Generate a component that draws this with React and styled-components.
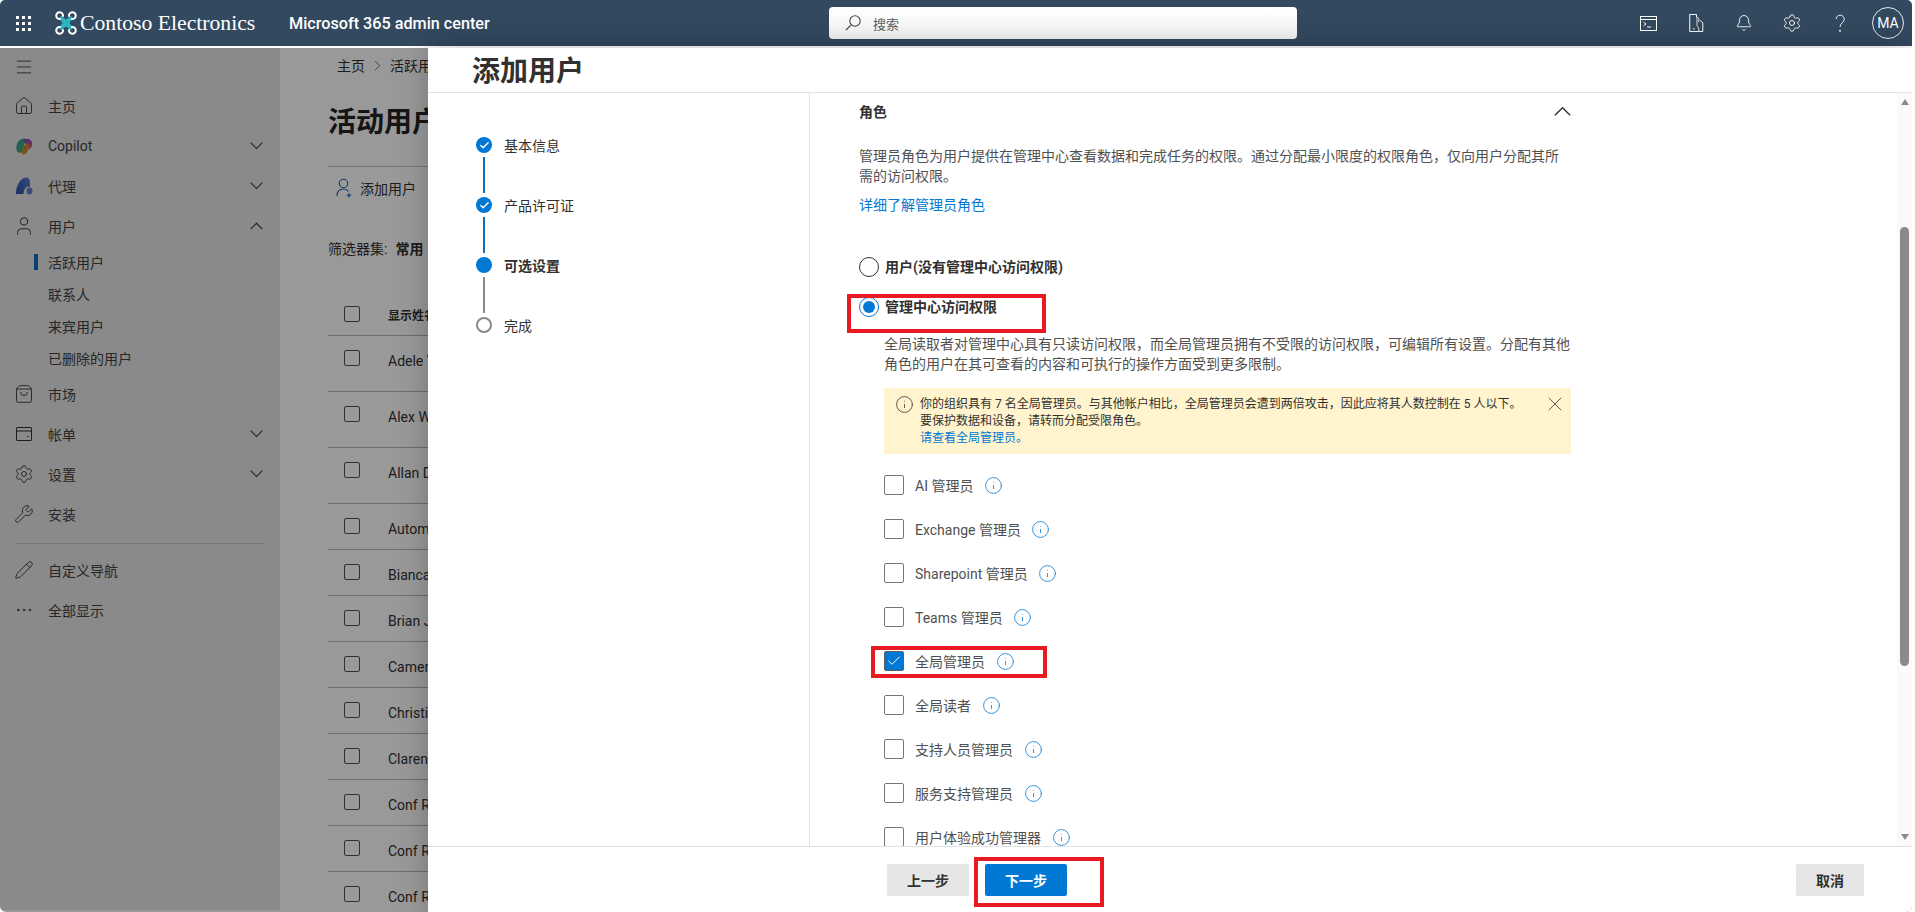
import React from 'react'
import styled, { createGlobalStyle } from 'styled-components'
import {
  House, User, ShoppingBag, Settings, Wrench, Pencil, Ellipsis,
  Bell, Info, X, Check, ChevronRight, Menu,
} from 'lucide-react'

const GlobalStyle = createGlobalStyle`
  html, body {
    margin: 0;
    background: #fff;
    overflow: hidden;
    font-family: Roboto, "Noto Sans CJK SC", sans-serif;
    font-size: 14px;
    color: #323130;
  }
`

const Shell = styled.div`
  position: relative;
  width: 1912px;
  height: 912px;
  overflow: hidden;
  border-radius: 5px 5px 6px 6px;
  background: #fff;
`

/* top bar */
const TopBar = styled.header`
  height: 46px;
  background: #33495f;
  color: #fff;
  display: flex;
  align-items: center;
  padding-left: 15px;
`
const BrandLogo = styled.svg`
  width: 24px;
  height: 24px;
  margin-left: 22px;
  flex: none;
`
const BrandName = styled.div`
  font-family: "Liberation Serif", serif;
  font-size: 21.7px;
  margin-left: 2px;
  width: 209px;
  white-space: nowrap;
`
const AppName = styled.div`
  font-size: 16.2px;
  font-weight: 500;
  width: 540px;
  white-space: nowrap;
`
const SearchBox = styled.div`
  width: 468px;
  height: 32px;
  border-radius: 4px;
  background: linear-gradient(to bottom, #fff, #f3f3f3);
  display: flex;
  align-items: center;
  gap: 11px;
  padding-left: 15px;
  box-sizing: border-box;
  color: #605e5c;
  font-size: 13px;
`
const TopIcons = styled.div`
  margin-left: auto;
  display: flex;
  align-items: center;
`
const TopIcon = styled.div`
  width: 48px;
  height: 46px;
  display: flex;
  align-items: center;
  justify-content: center;
`
const Avatar = styled.div`
  width: 32px;
  height: 32px;
  box-sizing: border-box;
  border: 1px solid #e8e8e8;
  border-radius: 50%;
  margin: 0 8px;
  display: flex;
  align-items: center;
  justify-content: center;
  font-size: 14px;
`

/* page behind the dialog */
const Workspace = styled.div`
  display: flex;
  height: 864px;
  margin-top: 2px;
  background: #fff;
`
const Sidebar = styled.nav`
  width: 280px;
  height: 862px;
  flex: none;
  background: #e6e6e6;
  color: #424242;
`
const MenuRow = styled.div`
  height: 38px;
  padding: 0 16px;
  display: flex;
  align-items: center;
`
const IconSlot = styled.span`
  width: 16px;
  height: 16px;
  flex: none;
  display: flex;
  align-items: center;
  justify-content: center;
  svg { flex: none; }
`
const NavItem = styled.div`
  height: 40px;
  padding: 0 17px 0 16px;
  display: flex;
  align-items: center;
  gap: 16px;
  span:nth-child(2) { flex: 1; }
`
const SubItem = styled.div`
  position: relative;
  height: 32px;
  padding-left: 48px;
  display: flex;
  align-items: center;
  &::before {
    content: "";
    display: ${p => (p.$active ? 'block' : 'none')};
    position: absolute;
    left: 34px;
    top: 8px;
    width: 4px;
    height: 16px;
    background: #0f6cbd;
  }
`
const NavDivider = styled.div`
  height: 1px;
  margin: 9px 16px 6px;
  background: #c4c4c4;
`
const Main = styled.main`
  flex: 1;
  padding: 7px 0 0 48px;
  overflow: hidden;
  background: #fff;
`
const Crumbs = styled.div`
  height: 20px;
  padding-left: 9px;
  display: flex;
  align-items: center;
  gap: 4px;
`
const PageTitle = styled.h1`
  margin: 28px 0 0;
  font-size: 28px;
  line-height: 40px;
  font-weight: 700;
  color: #242424;
`
const Toolbar = styled.div`
  margin-top: 23px;
  border-top: 1px solid #c4c4c4;
  height: 41px;
  padding-left: 8px;
  display: flex;
  align-items: center;
  gap: 7px;
`
const FilterLine = styled.div`
  margin-top: 31px;
  height: 20px;
  line-height: 20px;
  white-space: nowrap;
  b { margin-left: 8px; font-weight: 600; }
`
const TableHead = styled.div`
  margin-top: 34px;
  height: 42px;
  display: flex;
  align-items: center;
  padding-left: 16px;
  font-size: 12px;
  font-weight: 700;
`
const Row = styled.div`
  height: ${p => (p.$tall ? 56 : 46)}px;
  box-sizing: border-box;
  border-top: 1px solid #b8b8b8;
  padding-left: 16px;
  display: flex;
  align-items: flex-start;
  white-space: nowrap;
`
const RowName = styled.div`
  margin-top: 15px;
  line-height: 20px;
`
const TableCheck = styled.div`
  width: 16px;
  height: 16px;
  box-sizing: border-box;
  border: 1px solid #505050;
  border-radius: 2px;
  margin: ${p => (p.$head ? '0' : '14px')} 28px 0 0;
  flex: none;
`
const Scrim = styled.div`
  position: absolute;
  inset: 48px 0 0 0;
  background: rgba(0, 0, 0, 0.4);
  z-index: 1;
`

/* add user dialog */
const Panel = styled.section`
  position: absolute;
  top: 48px;
  left: 428px;
  right: 0;
  bottom: 0;
  z-index: 2;
  background: #fff;
  display: flex;
  flex-direction: column;
  box-shadow: 0 0 28px rgba(0, 0, 0, 0.25);
`
const PanelHead = styled.div`
  height: 45px;
  flex: none;
  box-sizing: border-box;
  border-bottom: 1px solid #e3e3e3;
  padding: 0 0 2px 44px;
  display: flex;
  align-items: center;
`
const PanelTitle = styled.h2`
  margin: 0;
  font-size: 28px;
  font-weight: 700;
  color: #323130;
`
const PanelBody = styled.div`
  flex: 1;
  min-height: 0;
  display: flex;
`
const Stepper = styled.div`
  width: 382px;
  flex: none;
  box-sizing: border-box;
  border-right: 1px solid #e3e3e3;
  padding: 40px 0 0 48px;
`
const Step = styled.div`
  height: 24px;
  display: flex;
  align-items: center;
  gap: 12px;
  font-weight: ${p => (p.$current ? 700 : 400)};
`
const StepDot = styled.div`
  width: 16px;
  height: 16px;
  box-sizing: border-box;
  border-radius: 50%;
  display: flex;
  align-items: center;
  justify-content: center;
  background: ${p => (p.$empty ? '#fff' : '#0078d4')};
  border: ${p => (p.$empty ? '2px solid #8a8a8a' : 'none')};
`
const StepLine = styled.div`
  width: 2px;
  height: 36px;
  margin-left: 7px;
  background: ${p => (p.$done ? '#0f6cbd' : '#8a8a8a')};
`
const Content = styled.div`
  flex: 1;
  min-width: 0;
  overflow: hidden;
  padding-left: 49px;
`
const Column = styled.div`
  width: 712px;
`
const SectionHead = styled.div`
  height: 38px;
  padding-bottom: 2px;
  box-sizing: border-box;
  display: flex;
  align-items: center;
  justify-content: space-between;
  font-weight: 700;
`
const Para = styled.p`
  margin: 15px 0 0;
  line-height: 20px;
  color: #505050;
`
const LinkLine = styled.a`
  display: block;
  margin-top: 9px;
  line-height: 20px;
  color: #0078d4;
`
const RadioRow = styled.div`
  display: flex;
  align-items: center;
  gap: 6px;
  height: 20px;
  margin-top: ${p => p.$gap}px;
  font-weight: 700;
  span { margin-top: -2px; }
`
const Radio = styled.div`
  width: 20px;
  height: 20px;
  box-sizing: border-box;
  border-radius: 50%;
  border: 1px solid ${p => (p.$on ? '#0078d4' : '#323130')};
  display: flex;
  align-items: center;
  justify-content: center;
  &::after {
    content: "";
    display: ${p => (p.$on ? 'block' : 'none')};
    width: 12px;
    height: 12px;
    border-radius: 50%;
    background: #0078d4;
  }
`
const Indented = styled.div`
  margin-left: 25px;
`
const IndentedPara = styled(Para)`
  margin-top: 17px;
`
const Notice = styled.div`
  margin-top: 14px;
  height: 66px;
  box-sizing: border-box;
  background: #fff4ce;
  padding: 8px 12px;
  display: flex;
  gap: 8px;
  font-size: 12px;
  line-height: 17px;
  div { flex: 1; white-space: nowrap; }
  a { color: #0078d4; }
`
const NoticeClose = styled.span`
  display: flex;
  margin: -4px -8px 0 0;
`
const RoleList = styled.div`
  margin-top: 9px;
`
const RoleRow = styled.div`
  height: 44px;
  display: flex;
  align-items: center;
  color: #505050;
`
const RoleBox = styled.div`
  width: 20px;
  height: 20px;
  box-sizing: border-box;
  border-radius: 2px;
  border: 1px solid ${p => (p.$on ? '#605e5c' : '#767676')};
  background: ${p => (p.$on ? '#0078d4' : '#fff')};
  display: flex;
  align-items: center;
  justify-content: center;
  margin-right: 11px;
`
const RoleInfo = styled(IconSlot)`
  margin-left: 12px;
`
const ScrollTrack = styled.div`
  width: 15px;
  flex: none;
  background: #fafafa;
  display: flex;
  flex-direction: column;
  align-items: center;
  padding: 6px 0 6px;
  box-sizing: border-box;
`
const ArrowUp = styled.div`
  border-left: 4.5px solid transparent;
  border-right: 4.5px solid transparent;
  border-bottom: 6px solid #8a8a8a;
`
const ArrowDown = styled.div`
  margin-top: auto;
  border-left: 4.5px solid transparent;
  border-right: 4.5px solid transparent;
  border-top: 6px solid #8a8a8a;
`
const Thumb = styled.div`
  width: 9px;
  height: 439px;
  margin-top: 122px;
  border-radius: 5px;
  background: #8a8a8a;
`
const Footer = styled.div`
  height: 66px;
  flex: none;
  box-sizing: border-box;
  border-top: 1px solid #e3e3e3;
  padding: 17px 48px 0 459px;
  display: flex;
  justify-content: space-between;
`
const ButtonGroup = styled.div`
  display: flex;
  gap: 16px;
`
const Button = styled.button`
  width: ${p => p.$w || 82}px;
  height: 32px;
  border: none;
  border-radius: 2px;
  font: inherit;
  font-weight: 700;
  background: ${p => (p.$primary ? '#0078d4' : '#e6e6e6')};
  color: ${p => (p.$primary ? '#fff' : '#323130')};
`
const RedMark = styled.div`
  position: absolute;
  left: ${p => p.$x}px;
  top: ${p => p.$y}px;
  width: ${p => p.$w}px;
  height: ${p => p.$h}px;
  box-sizing: border-box;
  border: 4px solid #e81a22;
  pointer-events: none;
`
const ChevronSvg = styled.svg`
  flex: none;
  transform: ${p => (p.$up ? 'none' : 'rotate(180deg)')};
`

const Chevron = ({ up, w = 13, color = '#333' }) => (
  <ChevronSvg $up={up} width={w} height={w * 0.6} viewBox="0 0 20 12" fill="none" stroke={color} strokeWidth="1.6">
    <path d="M1 11 L10 2 L19 11" />
  </ChevronSvg>
)

const Waffle = () => (
  <svg width="17" height="17" viewBox="0 0 17 17" fill="#fff">
    {[1, 7, 13].flatMap(y => [1, 7, 13].map(x => <rect key={`${x}-${y}`} x={x} y={y} width="3" height="3" />))}
  </svg>
)

const Logo = () => (
  <BrandLogo viewBox="0 0 24 24" fill="none">
    <path d="M7 5 L12 8.5 L17 5 L19 7 L15.5 12 L19 17 L17 19 L12 15.5 L7 19 L5 17 L8.5 12 L5 7 Z" fill="#2ab7c0" />
    <g stroke="#fff" strokeWidth="2" strokeLinecap="round">
      <path d="M6 8 A3.4 3.4 0 1 1 9 5" />
      <path d="M15 5 A3.4 3.4 0 1 1 18 8" />
      <path d="M18 16 A3.4 3.4 0 1 1 15 19" />
      <path d="M9 19 A3.4 3.4 0 1 1 6 16" />
    </g>
  </BrandLogo>
)

const SearchGlyph = () => (
  <svg width="18" height="18" viewBox="0 0 18 18" fill="none" stroke="#444" strokeWidth="1.1">
    <circle cx="11" cy="7" r="5.2" />
    <path d="M7.2 10.8 L2 16" />
  </svg>
)

const TerminalGlyph = () => (
  <svg width="17" height="15" viewBox="0 0 17 15" fill="none" stroke="#fff" strokeWidth="1">
    <rect x="0.5" y="0.5" width="16" height="14" />
    <path d="M0.5 3.5 H16.5 M3.5 6 L6 8 L3.5 10 M7 11 H11" />
  </svg>
)

const DocHandGlyph = () => (
  <svg width="15" height="18" viewBox="0 0 16 20" fill="none" stroke="#fff" strokeWidth="1.1">
    <path d="M8 4 V0.5 H0.5 V19.5 H15 V10 L12 7" />
    <path d="M8.5 13 V5 C8.5 3.5 10.5 3.5 10.5 5 V9 M8.5 13 L10.5 15.5 V19" stroke="#d8d8d8" />
    <path d="M4 16.5 H6" />
  </svg>
)

const HelpGlyph = () => (
  <svg width="12" height="19" viewBox="0 0 14 22" fill="none" stroke="#fff" strokeWidth="1.1">
    <path d="M2.5 6 C2.5 -0.5 12 0 12 6 C12 10 7 10.5 7 15" />
    <circle cx="7" cy="19.5" r="0.7" fill="#fff" />
  </svg>
)

const AddUserGlyph = () => (
  <svg width="17" height="20" viewBox="0 0 17 20" fill="none" strokeWidth="1.1">
    <circle cx="7.5" cy="5.5" r="4.2" stroke="#2a5f9e" />
    <path d="M1 18 C1 13 3.5 11 7.5 11 C10 11 11.5 12 12.5 13.5" stroke="#2a5f9e" />
    <path d="M13 15 V19.5 M10.8 17.2 H15.2" stroke="#0f5ca8" />
  </svg>
)

const CopilotGlyph = () => (
  <svg width="17" height="17" viewBox="0 0 17 17">
    <defs>
      <linearGradient id="cpA" x1="0" y1="0" x2="1" y2="1">
        <stop offset="0" stopColor="#1aa0b8" />
        <stop offset="1" stopColor="#5dae3c" />
      </linearGradient>
      <linearGradient id="cpB" x1="0" y1="0" x2="1" y2="1">
        <stop offset="0" stopColor="#7a4fc0" />
        <stop offset="1" stopColor="#d0458a" />
      </linearGradient>
      <linearGradient id="cpC" x1="0" y1="0" x2="1" y2="1">
        <stop offset="0" stopColor="#d96a3a" />
        <stop offset="1" stopColor="#c9a32a" />
      </linearGradient>
    </defs>
    <path d="M6 1 C8 0 10 0.5 9.5 2.5 L6.5 13 C6 15 3 15.5 1.5 14 C0 12 0 9 1 6 C1.8 3.5 3.5 1.5 6 1 Z" fill="url(#cpA)" />
    <path d="M7 1 H12 C15 1.5 16.5 4 16 7 C15.8 9.5 14 11 12.5 11 L9 5 Z" fill="url(#cpB)" />
    <path d="M10 6 C12 5 14 6 14 8 L11 14.5 C10 16.5 7 17 5.5 15.5 L8 8 Z" fill="url(#cpC)" />
  </svg>
)

const AgentGlyph = () => (
  <svg width="17" height="18" viewBox="0 0 17 18">
    <defs>
      <linearGradient id="agA" x1="0" y1="1" x2="1" y2="0">
        <stop offset="0" stopColor="#2550a8" />
        <stop offset="1" stopColor="#5a7fd0" />
      </linearGradient>
    </defs>
    <path d="M0 17 C0 9 4 1 10 0.5 C13 0.3 14 3 14 6 V10 C11 8 8 11 7.5 17 Z" fill="url(#agA)" />
    <rect x="10.5" y="10.5" width="6" height="7" rx="3" fill="#6a7fc8" />
  </svg>
)

const BillGlyph = () => (
  <svg width="16" height="14" viewBox="0 0 16 14" fill="none" stroke="#333" strokeWidth="1">
    <rect x="0.5" y="0.5" width="15" height="13" rx="0.5" />
    <path d="M0.5 4 H15.5 M11 9.5 H12.5" />
  </svg>
)

const navIcon = { size: 20, strokeWidth: 1.05, color: '#333' }

const rows = [
  ['Adele Vance', true], ['Alex Wilber', true], ['Allan Deyoung', true], ['Automate Bot'],
  ['Bianca Pisani'], ['Brian Johnson'], ['Cameron White'], ['Christie Cline'],
  ['Clarence Reed'], ['Conf Room Adams'], ['Conf Room Baker'], ['Conf Room Crystal'],
]

const roles = [
  ['AI 管理员'], ['Exchange 管理员'], ['Sharepoint 管理员'], ['Teams 管理员'], ['全局管理员', true],
  ['全局读者'], ['支持人员管理员'], ['服务支持管理员'], ['用户体验成功管理器'],
]

export default function App() {
  return (
    <Shell>
      <GlobalStyle />
      <TopBar>
        <Waffle />
        <Logo />
        <BrandName>Contoso Electronics</BrandName>
        <AppName>Microsoft 365 admin center</AppName>
        <SearchBox><SearchGlyph />搜索</SearchBox>
        <TopIcons>
          <TopIcon><TerminalGlyph /></TopIcon>
          <TopIcon><DocHandGlyph /></TopIcon>
          <TopIcon><Bell size={18} strokeWidth={1.2} /></TopIcon>
          <TopIcon><Settings size={20} strokeWidth={1.1} /></TopIcon>
          <TopIcon><HelpGlyph /></TopIcon>
          <Avatar>MA</Avatar>
        </TopIcons>
      </TopBar>

      <Workspace>
        <Sidebar>
          <MenuRow><IconSlot><Menu size={20} strokeWidth={1} color="#333" /></IconSlot></MenuRow>
          <NavItem><IconSlot><House {...navIcon} /></IconSlot><span>主页</span></NavItem>
          <NavItem><IconSlot><CopilotGlyph /></IconSlot><span>Copilot</span><Chevron /></NavItem>
          <NavItem><IconSlot><AgentGlyph /></IconSlot><span>代理</span><Chevron /></NavItem>
          <NavItem><IconSlot><User {...navIcon} size={22} /></IconSlot><span>用户</span><Chevron up /></NavItem>
          <SubItem $active>活跃用户</SubItem>
          <SubItem>联系人</SubItem>
          <SubItem>来宾用户</SubItem>
          <SubItem>已删除的用户</SubItem>
          <NavItem><IconSlot><ShoppingBag {...navIcon} /></IconSlot><span>市场</span></NavItem>
          <NavItem><IconSlot><BillGlyph /></IconSlot><span>帐单</span><Chevron /></NavItem>
          <NavItem><IconSlot><Settings {...navIcon} /></IconSlot><span>设置</span><Chevron /></NavItem>
          <NavItem><IconSlot><Wrench {...navIcon} /></IconSlot><span>安装</span></NavItem>
          <NavDivider />
          <NavItem><IconSlot><Pencil {...navIcon} /></IconSlot><span>自定义导航</span></NavItem>
          <NavItem><IconSlot><Ellipsis {...navIcon} /></IconSlot><span>全部显示</span></NavItem>
        </Sidebar>
        <Main>
          <Crumbs>主页<ChevronRight size={17} strokeWidth={1} />活跃用户</Crumbs>
          <PageTitle>活动用户</PageTitle>
          <Toolbar><AddUserGlyph />添加用户</Toolbar>
          <FilterLine>筛选器集:<b>常用</b></FilterLine>
          <TableHead><TableCheck $head />显示姓名</TableHead>
          {rows.map(([name, tall]) => (
            <Row key={name} $tall={tall}>
              <TableCheck />
              <RowName>{name}</RowName>
            </Row>
          ))}
        </Main>
      </Workspace>
      <Scrim />

      <Panel>
        <PanelHead><PanelTitle>添加用户</PanelTitle></PanelHead>
        <PanelBody>
          <Stepper>
            <Step><StepDot><Check size={11} strokeWidth={3} color="#fff" /></StepDot>基本信息</Step>
            <StepLine $done />
            <Step><StepDot><Check size={11} strokeWidth={3} color="#fff" /></StepDot>产品许可证</Step>
            <StepLine $done />
            <Step $current><StepDot />可选设置</Step>
            <StepLine />
            <Step><StepDot $empty />完成</Step>
          </Stepper>
          <Content>
            <Column>
              <SectionHead>角色<Chevron up w={17} color="#323130" /></SectionHead>
              <Para>管理员角色为用户提供在管理中心查看数据和完成任务的权限。通过分配最小限度的权限角色，仅向用户分配其所需的访问权限。</Para>
              <LinkLine>详细了解管理员角色</LinkLine>
              <RadioRow $gap={42}><Radio /><span>用户(没有管理中心访问权限)</span></RadioRow>
              <RadioRow $gap={20}><Radio $on /><span>管理中心访问权限</span></RadioRow>
              <Indented>
                <IndentedPara>全局读取者对管理中心具有只读访问权限，而全局管理员拥有不受限的访问权限，可编辑所有设置。分配有其他角色的用户在其可查看的内容和可执行的操作方面受到更多限制。</IndentedPara>
                <Notice>
                  <IconSlot><Info size={19} strokeWidth={1} color="#323130" /></IconSlot>
                  <div>
                    你的组织具有 7 名全局管理员。与其他帐户相比，全局管理员会遭到两倍攻击，因此应将其人数控制在 5 人以下。<br />
                    要保护数据和设备，请转而分配受限角色。<br />
                    <a>请查看全局管理员。</a>
                  </div>
                  <NoticeClose><X size={24} strokeWidth={0.8} color="#323130" /></NoticeClose>
                </Notice>
              </Indented>
              <Indented>
                <RoleList>
                  {roles.map(([name, on]) => (
                    <RoleRow key={name}>
                      <RoleBox $on={on}>{on && <Check size={16} strokeWidth={1.5} color="#fff" />}</RoleBox>
                      {name}
                      <RoleInfo><Info size={19} strokeWidth={1} color="#0078d4" /></RoleInfo>
                    </RoleRow>
                  ))}
                </RoleList>
              </Indented>
            </Column>
          </Content>
          <ScrollTrack>
            <ArrowUp />
            <Thumb />
            <ArrowDown />
          </ScrollTrack>
        </PanelBody>
        <Footer>
          <ButtonGroup>
            <Button>上一步</Button>
            <Button $primary>下一步</Button>
          </ButtonGroup>
          <Button $w={68}>取消</Button>
        </Footer>
        <RedMark $x={419} $y={246} $w={199} $h={39} />
        <RedMark $x={443} $y={598} $w={176} $h={32} />
        <RedMark $x={546} $y={809} $w={130} $h={50} />
      </Panel>
    </Shell>
  )
}
